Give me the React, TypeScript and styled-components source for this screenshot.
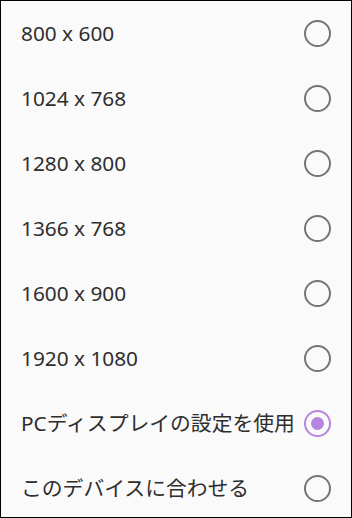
import React, { useState } from 'react';
import styled, { createGlobalStyle } from 'styled-components';

const GlobalStyle = createGlobalStyle`
  html, body {
    margin: 0;
    padding: 0;
    background: #fafafa;
  }
`;

const options = [
  '800 x 600',
  '1024 x 768',
  '1280 x 800',
  '1366 x 768',
  '1600 x 900',
  '1920 x 1080',
  'PCディスプレイの設定を使用',
  'このデバイスに合わせる',
];

export default function App() {
  const [selected, setSelected] = useState(6);

  return (
    <>
      <GlobalStyle />
      <Frame>
        <List>
          {options.map((label, i) => (
            <Row key={label} onClick={() => setSelected(i)}>
              <Label>{label}</Label>
              <Radio checked={i === selected} />
            </Row>
          ))}
        </List>
      </Frame>
    </>
  );
}

const Frame = styled.div`
  box-sizing: border-box;
  width: 352px;
  height: 518px;
  border: 1px solid #000;
  background: #fafafa;
  overflow: hidden;
`;

const List = styled.ul`
  list-style: none;
  margin: 0;
  padding: 0;
`;

const Row = styled.li`
  box-sizing: border-box;
  display: flex;
  align-items: center;
  justify-content: space-between;
  height: 65px;
  padding: 0 20px;
  cursor: pointer;
`;

const Label = styled.span`
  font-family: "Noto Sans", "Noto Sans CJK JP", sans-serif;
  font-size: 20.8px;
  line-height: 1;
  color: #2e2e2e;
`;

const Radio = styled.span<{ checked: boolean }>`
  box-sizing: border-box;
  position: relative;
  flex-shrink: 0;
  width: 27px;
  height: 27px;
  border-radius: 50%;
  border: 2.5px solid ${p => (p.checked ? '#b685e0' : '#757575')};

  &::after {
    content: '';
    display: ${p => (p.checked ? 'block' : 'none')};
    position: absolute;
    inset: 5px;
    border-radius: 50%;
    background: #b685e0;
  }
`;
